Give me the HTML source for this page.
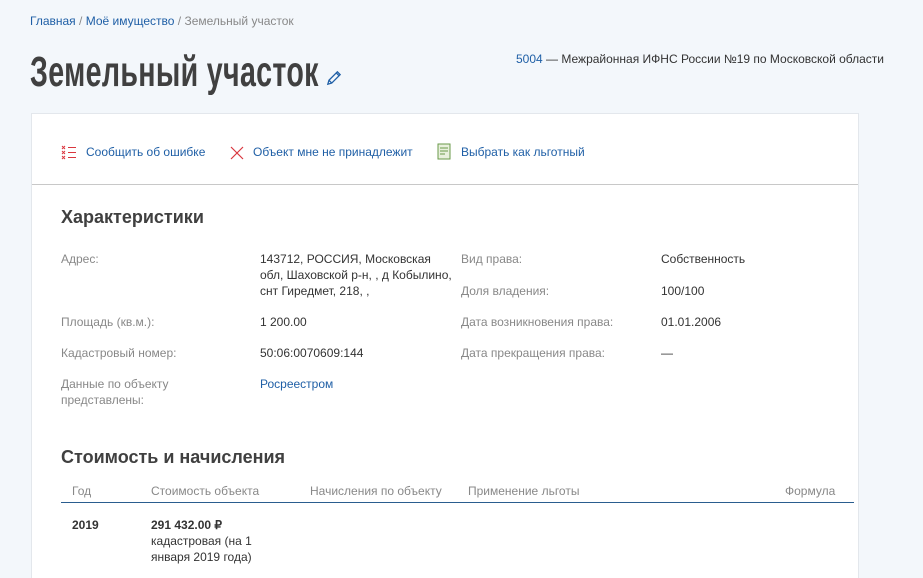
<!DOCTYPE html>
<html><head><meta charset="utf-8"><style>
html,body{margin:0;width:923px;height:578px;overflow:hidden}
body{background:#f3f7fb;font-family:"Liberation Sans",sans-serif;position:relative;color:#333}
.a{position:absolute;white-space:nowrap}
.bl{color:#1f5fa6}
.g{color:#888}
.s12{font-size:12px}
.card{position:absolute;left:31px;top:113px;width:826px;height:480px;background:#fff;border:1px solid #e3e7ec}
.lbl{color:#888;font-size:12px;line-height:16px}
.val{color:#333;font-size:12px;line-height:16px}
</style></head><body>
<div class="a s12" style="left:30px;top:14px"><span class="bl">Главная</span> <span class="g">/</span> <span class="bl">Моё имущество</span> <span class="g">/ Земельный участок</span></div>
<div class="a" style="left:30px;top:48px;font-size:43px;font-weight:bold;color:#404040;transform:scaleX(0.665);transform-origin:0 0;letter-spacing:0.5px">Земельный участок</div>
<svg class="a" style="left:325px;top:69px" width="18" height="18" viewBox="0 0 16 16"><path d="M2.5 13.5 L3.5 10 L11 2.5 L13.5 5 L6 12.5 Z M10 3.5 L12.5 6 M3.5 10 L6 12.5" fill="none" stroke="#1f5fa6" stroke-width="1.1"/></svg>
<div class="a s12" style="left:516px;top:52px"><span class="bl">5004</span> — Межрайонная ИФНС России №19 по Московской области</div>
<div class="card">
<div style="position:absolute;left:0;right:0;top:70px;border-top:1px solid #c8c8c8"></div>
</div>
<svg class="a" style="left:61px;top:145px" width="16" height="16" viewBox="0 0 16 16"><g stroke="#d9363e" stroke-width="1"><path d="M1 1l3 3M4 1l-3 3M1 6l3 3M4 6l-3 3M1 11l3 3M4 11l-3 3M7 2.5h8M7 7.5h8M7 12.5h8"/></g></svg>
<div class="a s12 bl" style="left:86px;top:145px">Сообщить об ошибке</div>
<svg class="a" style="left:230px;top:146px" width="14" height="14"><path d="M1 1L13 13M13 1L1 13" stroke="#d9363e" stroke-width="1.2"/></svg>
<div class="a s12 bl" style="left:253px;top:145px">Объект мне не принадлежит</div>
<svg class="a" style="left:437px;top:143px" width="15" height="18"><rect x="1" y="1" width="12" height="15" fill="#e8f0dc" stroke="#6a9a4a"/><path d="M3 5h8M3 8h8M3 11h5" stroke="#6a9a4a"/></svg>
<div class="a s12 bl" style="left:461px;top:145px">Выбрать как льготный</div>

<div class="a" style="left:61px;top:207px;font-size:18px;font-weight:bold;color:#404040">Характеристики</div>
<div class="a lbl" style="left:61px;top:251px">Адрес:</div>
<div class="a val" style="left:260px;top:251px;white-space:normal;width:194px">143712, РОССИЯ, Московская обл, Шаховской р-н, , д Кобылино, снт Гиредмет, 218, ,</div>
<div class="a lbl" style="left:61px;top:314px">Площадь (кв.м.):</div>
<div class="a val" style="left:260px;top:314px">1 200.00</div>
<div class="a lbl" style="left:61px;top:345px">Кадастровый номер:</div>
<div class="a val" style="left:260px;top:345px">50:06:0070609:144</div>
<div class="a lbl" style="left:61px;top:376px">Данные по объекту<br>представлены:</div>
<div class="a val bl" style="left:260px;top:376px;color:#1f5fa6">Росреестром</div>
<div class="a lbl" style="left:461px;top:251px">Вид права:</div>
<div class="a val" style="left:661px;top:251px">Собственность</div>
<div class="a lbl" style="left:461px;top:283px">Доля владения:</div>
<div class="a val" style="left:661px;top:283px">100/100</div>
<div class="a lbl" style="left:461px;top:314px">Дата возникновения права:</div>
<div class="a val" style="left:661px;top:314px">01.01.2006</div>
<div class="a lbl" style="left:461px;top:345px">Дата прекращения права:</div>
<div class="a val" style="left:661px;top:345px">—</div>

<div class="a" style="left:61px;top:447px;font-size:18px;font-weight:bold;color:#404040">Стоимость и начисления</div>
<div class="a lbl" style="left:72px;top:483px">Год</div>
<div class="a lbl" style="left:151px;top:483px">Стоимость объекта</div>
<div class="a lbl" style="left:310px;top:483px">Начисления по объекту</div>
<div class="a lbl" style="left:468px;top:483px">Применение льготы</div>
<div class="a lbl" style="left:785px;top:483px">Формула</div>
<div class="a" style="left:61px;top:502px;width:793px;border-top:1px solid #2a5d8f"></div>
<div class="a val" style="left:72px;top:517px;font-weight:bold">2019</div>
<div class="a val" style="left:151px;top:517px"><b>291 432.00 ₽</b><br>кадастровая (на 1<br>января 2019 года)</div>
</body></html>
